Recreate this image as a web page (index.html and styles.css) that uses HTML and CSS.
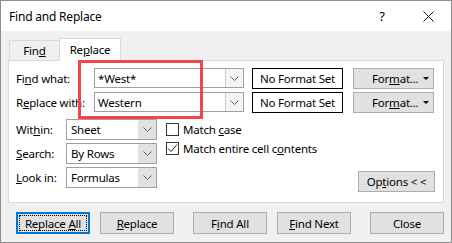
FILE: index.html
```html
<!DOCTYPE html>
<html lang="en">

<head>
    <meta charset="UTF-8">
    <meta name="viewport" content="width=device-width, initial-scale=1.0">
    <title>Find and Replace</title>
    <link rel="stylesheet" href="styles.css">
</head>

<body>
    <div class="window">
        <div class="titlebar">
            <span class="title">Find and Replace</span>
            <div class="caption-btn help">?</div>
            <div class="caption-btn close">
                <svg width="11" height="11" viewBox="0 0 11 11">
                    <path d="M0.5 0.5 L10.5 10.5 M10.5 0.5 L0.5 10.5" stroke="#111" stroke-width="1" fill="none" />
                </svg>
            </div>
        </div>

        <div class="dialog">
            <div class="tabs">
                <div class="tab"><span>Fin<u>d</u></span></div>
                <div class="tab active"><span>Re<u>p</u>lace</span></div>
            </div>

            <div class="panel">
                <div class="field-row">
                    <span class="field-label">Fi<u>n</u>d what:</span>
                    <div class="combo">
                        <span class="combo-text">*West*</span>
                        <span class="combo-arrow">
                            <svg width="9" height="5" viewBox="0 0 9 5"><path d="M0.5 0.5 L4.5 4.5 L8.5 0.5" stroke="#606060" fill="none" /></svg>
                        </span>
                    </div>
                    <div class="format-box">No Format Set</div>
                    <div class="btn format-btn"><span>For<u>m</u>at...</span><span class="caret"></span></div>
                </div>
                <div class="field-row">
                    <span class="field-label">R<u>e</u>place with:</span>
                    <div class="combo">
                        <span class="combo-text">Western</span>
                        <span class="combo-arrow">
                            <svg width="9" height="5" viewBox="0 0 9 5"><path d="M0.5 0.5 L4.5 4.5 L8.5 0.5" stroke="#606060" fill="none" /></svg>
                        </span>
                    </div>
                    <div class="format-box">No Format Set</div>
                    <div class="btn format-btn"><span>For<u>m</u>at...</span><span class="caret"></span></div>
                </div>

                <div class="options">
                    <div class="selects">
                        <div class="select-row">
                            <span class="select-label">Wit<u>h</u>in:</span>
                            <div class="select">
                                <span class="select-text">Sheet</span>
                                <span class="select-arrow">
                                    <svg width="9" height="5" viewBox="0 0 9 5"><path d="M0.5 0.5 L4.5 4.5 L8.5 0.5" stroke="#606060" fill="none" /></svg>
                                </span>
                            </div>
                        </div>
                        <div class="select-row">
                            <span class="select-label"><u>S</u>earch:</span>
                            <div class="select">
                                <span class="select-text">By Rows</span>
                                <span class="select-arrow">
                                    <svg width="9" height="5" viewBox="0 0 9 5"><path d="M0.5 0.5 L4.5 4.5 L8.5 0.5" stroke="#606060" fill="none" /></svg>
                                </span>
                            </div>
                        </div>
                        <div class="select-row">
                            <span class="select-label"><u>L</u>ook in:</span>
                            <div class="select">
                                <span class="select-text">Formulas</span>
                                <span class="select-arrow">
                                    <svg width="9" height="5" viewBox="0 0 9 5"><path d="M0.5 0.5 L4.5 4.5 L8.5 0.5" stroke="#606060" fill="none" /></svg>
                                </span>
                            </div>
                        </div>
                    </div>

                    <div class="checks">
                        <div class="check"><span class="box"></span><span>Match <u>c</u>ase</span></div>
                        <div class="check">
                            <span class="box">
                                <svg width="11" height="11" viewBox="0 0 11 11"><path d="M1 5.5 L4 8.5 L10 1.5" stroke="#222" stroke-width="1" fill="none" /></svg>
                            </span>
                            <span>Match entire cell c<u>o</u>ntents</span>
                        </div>
                    </div>

                    <div class="btn options-btn"><span>Op<u>t</u>ions &lt; &lt;</span></div>
                </div>
            </div>

            <div class="actions">
                <div class="btn action-btn focused"><span class="focus-ring"><span>Replace <u>A</u>ll</span></span></div>
                <div class="btn action-btn"><span><u>R</u>eplace</span></div>
                <div class="btn action-btn wide-gap"><span>F<u>i</u>nd All</span></div>
                <div class="btn action-btn"><span><u>F</u>ind Next</span></div>
                <div class="btn action-btn wide-gap"><span>Close</span></div>
            </div>
        </div>

        <!-- annotation box drawn over the two search fields -->
        <div class="highlight"></div>
    </div>
</body>

</html>
```

FILE: styles.css
```css
* {
    margin: 0;
    padding: 0;
    box-sizing: border-box;
}

body {
    font-family: "Noto Sans", "Open Sans", sans-serif;
    font-size: 11.5px;
    letter-spacing: -0.2px;
    color: #000;
    background: #f0f0f0;
}

u {
    text-decoration: underline;
    text-underline-offset: 1px;
    text-decoration-thickness: 1px;
}

.window {
    position: relative;
    width: 452px;
    height: 243px;
    border: 1px solid #8e8e8e;
    background-color: #f0f0f0;
}

.titlebar {
    display: flex;
    align-items: center;
    height: 30px;
    background-color: #fff;
}

.title {
    flex: 1;
    padding-left: 8px;
    font-size: 12px;
}

.caption-btn {
    width: 46px;
    height: 30px;
    display: flex;
    align-items: center;
    justify-content: center;
}

.help {
    font-size: 13px;
}

.dialog {
    padding: 7px 7px 0 7px;
}

.tabs {
    display: flex;
    align-items: flex-end;
    height: 22px;
    padding-left: 1px;
}

.tab {
    width: 51px;
    height: 20px;
    display: flex;
    align-items: center;
    justify-content: center;
    border: 1px solid #d9d9d9;
    border-bottom: none;
    background-color: #f0f0f0;
}

.tab.active {
    width: 62px;
    height: 23px;
    margin-left: -1px;
    margin-bottom: -1px;
    background-color: #fff;
    position: relative;
    padding-bottom: 2px;
}

.panel {
    height: 143px;
    border: 1px solid #d9d9d9;
    background-color: #fff;
    padding: 7px 8px 0 7px;
}

.field-row {
    display: flex;
    align-items: center;
    height: 20px;
    margin-bottom: 4px;
}

.field-label {
    width: 78px;
}

.combo {
    display: flex;
    width: 150px;
    height: 20px;
    border: 1px solid #a0a0a0;
    margin-right: 8px;
}

.combo-text {
    flex: 1;
    padding-left: 3px;
    display: flex;
    align-items: center;
}

.combo-arrow {
    width: 18px;
    display: flex;
    align-items: center;
    justify-content: center;
    border-left: 1px solid #c8c8c8;
    background-color: #f4f4f4;
}

.format-box {
    width: 91px;
    height: 21px;
    border: 1px solid #000;
    display: flex;
    align-items: center;
    justify-content: center;
    margin-right: 10px;
}

.btn {
    display: flex;
    align-items: center;
    justify-content: center;
    background-color: #e1e1e1;
    border: 1px solid #adadad;
}

.format-btn {
    width: 81px;
    height: 21px;
    justify-content: flex-start;
    padding-left: 18px;
}

.caret {
    margin-left: auto;
    margin-right: 4px;
    width: 0;
    height: 0;
    border-left: 3px solid transparent;
    border-right: 3px solid transparent;
    border-top: 3px solid #000;
}

.options {
    display: flex;
    margin-top: 7px;
}

.selects {
    display: flex;
    flex-direction: column;
    gap: 3px;
}

.select-row {
    display: flex;
    align-items: center;
}

.select-label {
    width: 50px;
}

.select {
    display: flex;
    width: 91px;
    height: 21px;
    border: 1px solid #a0a0a0;
}

.select-text {
    flex: 1;
    padding-left: 4px;
    display: flex;
    align-items: center;
}

.select-arrow {
    width: 18px;
    display: flex;
    align-items: center;
    justify-content: center;
    background-color: #e1e1e1;
}

.checks {
    margin-left: 9px;
    padding-top: 1px;
}

.check {
    display: flex;
    align-items: center;
    height: 19px;
}

.box {
    width: 13px;
    height: 13px;
    border: 1px solid #333;
    margin-right: 4px;
    display: flex;
    align-items: center;
    justify-content: center;
}

.options-btn {
    width: 77px;
    height: 21px;
    margin-left: auto;
    margin-top: 52px;
}

.actions {
    display: flex;
    padding-left: 8px;
    margin-top: 9px;
}

.action-btn {
    width: 74px;
    height: 22px;
    margin-left: 10px;
}

.action-btn:first-child {
    margin-left: 0;
}

.action-btn.wide-gap {
    margin-left: 19px;
}

.action-btn.focused {
    border: 2px solid #0078d7;
    padding: 1px;
}

.focus-ring {
    width: 100%;
    height: 100%;
    display: flex;
    align-items: center;
    justify-content: center;
    border: 1px dotted #000;
}

.highlight {
    position: absolute;
    left: 77px;
    top: 59px;
    width: 125px;
    height: 59px;
    border: 3px solid #f0464a;
}
```
